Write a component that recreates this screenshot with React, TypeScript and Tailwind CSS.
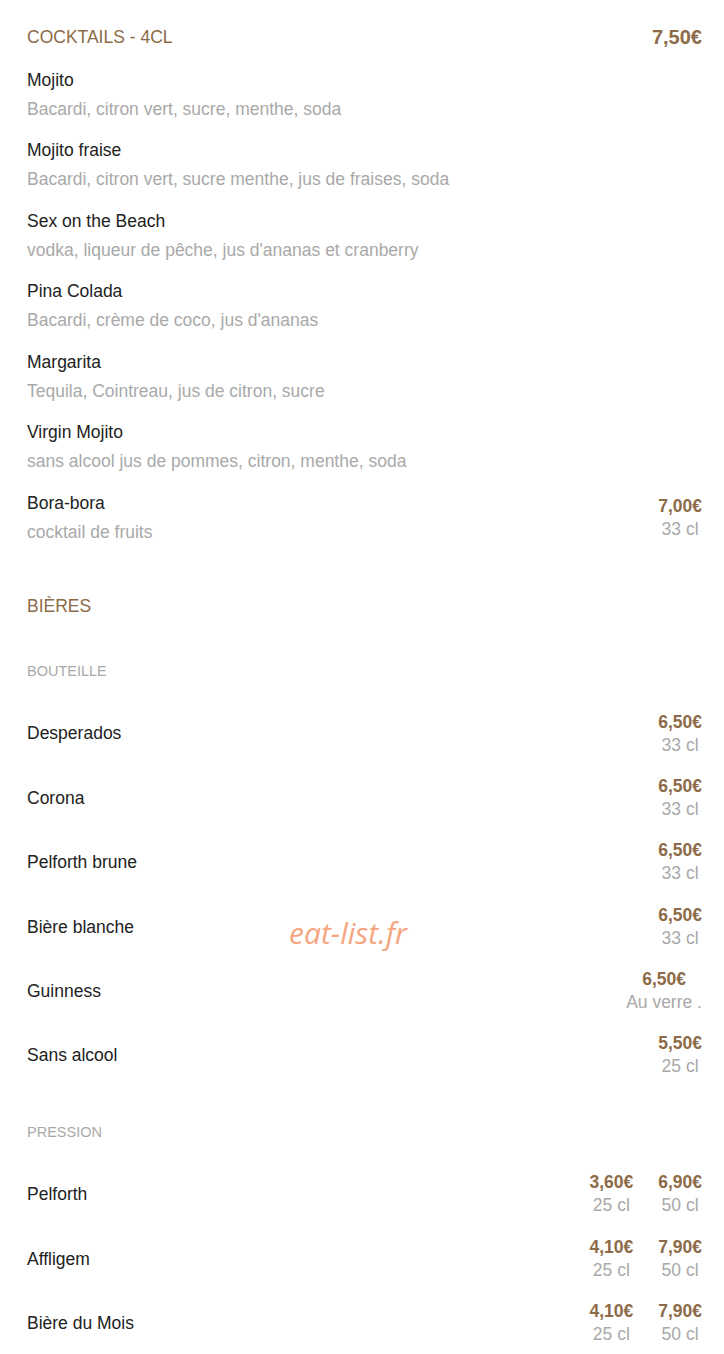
import React from 'react';

const cocktails = [
    { name: 'Mojito', desc: 'Bacardi, citron vert, sucre, menthe, soda' },
    { name: 'Mojito fraise', desc: 'Bacardi, citron vert, sucre menthe, jus de fraises, soda' },
    { name: 'Sex on the Beach', desc: "vodka, liqueur de pêche, jus d'ananas et cranberry" },
    { name: 'Pina Colada', desc: "Bacardi, crème de coco, jus d'ananas" },
    { name: 'Margarita', desc: 'Tequila, Cointreau, jus de citron, sucre' },
    { name: 'Virgin Mojito', desc: 'sans alcool jus de pommes, citron, menthe, soda' },
];

type Price = { price: string; unit: string };

const bouteilles: { name: string; prices: Price[] }[] = [
    { name: 'Desperados', prices: [{ price: '6,50€', unit: '33 cl' }] },
    { name: 'Corona', prices: [{ price: '6,50€', unit: '33 cl' }] },
    { name: 'Pelforth brune', prices: [{ price: '6,50€', unit: '33 cl' }] },
    { name: 'Bière blanche', prices: [{ price: '6,50€', unit: '33 cl' }] },
    { name: 'Guinness', prices: [{ price: '6,50€', unit: 'Au verre .' }] },
    { name: 'Sans alcool', prices: [{ price: '5,50€', unit: '25 cl' }] },
];

const pressions: { name: string; prices: Price[] }[] = [
    { name: 'Pelforth', prices: [{ price: '3,60€', unit: '25 cl' }, { price: '6,90€', unit: '50 cl' }] },
    { name: 'Affligem', prices: [{ price: '4,10€', unit: '25 cl' }, { price: '7,90€', unit: '50 cl' }] },
    { name: 'Bière du Mois', prices: [{ price: '4,10€', unit: '25 cl' }, { price: '7,90€', unit: '50 cl' }] },
];

const Prices: React.FC<{ prices: Price[] }> = ({ prices }) => (
    <div className="flex gap-[25px]">
        {prices.map((p, i) => (
            <div key={i} className="flex flex-col items-center text-center">
                <span className="text-[17.5px] leading-[23px] font-bold text-[#8c6b48]">{p.price}</span>
                <span className="text-[17.5px] leading-[23px] text-[#a9a9a9]">{p.unit}</span>
            </div>
        ))}
    </div>
);

const BeerRow: React.FC<{ name: string; prices: Price[] }> = ({ name, prices }) => (
    <div className="flex items-center justify-between h-[46px] mb-[18.4px]">
        <span className="text-[17.5px] text-[#222]">{name}</span>
        <Prices prices={prices} />
    </div>
);

export default function App() {
    return (
        <div
            className="relative bg-white min-h-[1354px] pl-[27px] pr-[22px] pt-[22.5px]"
            style={{ fontFamily: '"Liberation Sans", Arial, sans-serif' }}
        >
            {/* Cocktails */}
            <div className="flex items-center justify-between h-[29px] mb-[14px]">
                <span className="text-[17.5px] text-[#8c6b48]">COCKTAILS - 4CL</span>
                <span className="text-[20px] font-bold text-[#8c6b48]">7,50€</span>
            </div>

            {cocktails.map((c) => (
                <div key={c.name} className="mb-[12.5px]">
                    <div className="text-[17.5px] leading-[29px] text-[#222]">{c.name}</div>
                    <div className="text-[17.5px] leading-[29px] text-[#a9a9a9]">{c.desc}</div>
                </div>
            ))}

            <div className="flex items-center justify-between">
                <div>
                    <div className="text-[17.5px] leading-[29px] text-[#222]">Bora-bora</div>
                    <div className="text-[17.5px] leading-[29px] text-[#a9a9a9]">cocktail de fruits</div>
                </div>
                <Prices prices={[{ price: '7,00€', unit: '33 cl' }]} />
            </div>

            {/* Bieres */}
            <div className="mt-[45px] text-[17.5px] leading-[29px] text-[#8c6b48]">BIÈRES</div>

            <div className="mt-[40.5px] mb-[29.5px] text-[14.5px] leading-[20px] text-[#a9a9a9]">BOUTEILLE</div>
            {bouteilles.map((b) => (
                <BeerRow key={b.name} name={b.name} prices={b.prices} />
            ))}

            <div className="mt-[44px] mb-[29px] text-[14.5px] leading-[20px] text-[#a9a9a9]">PRESSION</div>
            {pressions.map((b) => (
                <BeerRow key={b.name} name={b.name} prices={b.prices} />
            ))}

            {/* watermark */}
            <span
                className="absolute left-[289px] top-[912px] text-[30px] leading-[41px] italic text-[#f5a680]"
                style={{ fontFamily: '"Open Sans", sans-serif' }}
            >
                eat-list.fr
            </span>
        </div>
    );
}
